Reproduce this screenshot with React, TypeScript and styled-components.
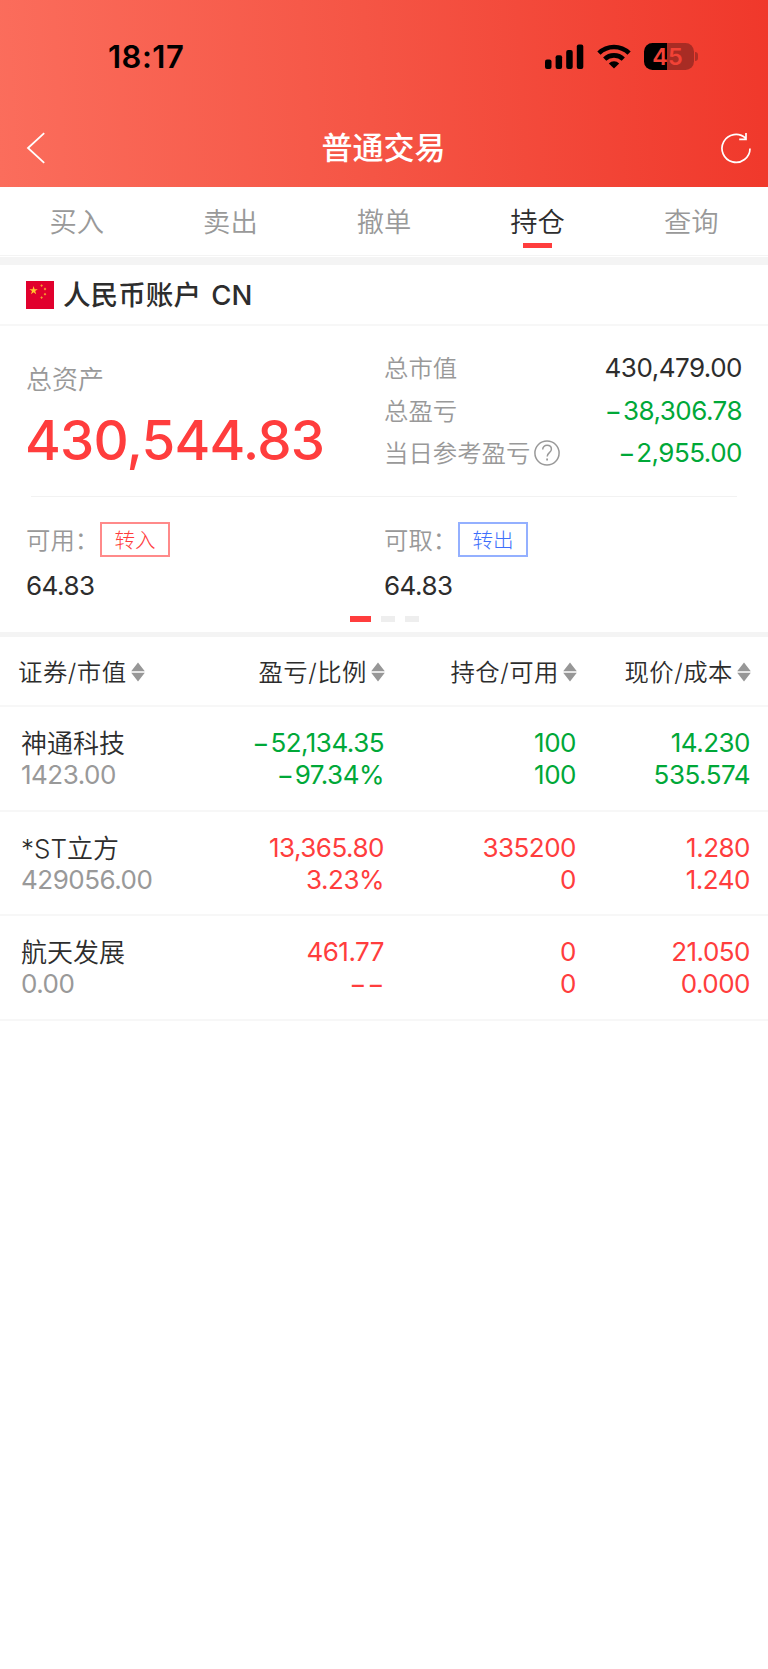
import React from "react";
import styled, { createGlobalStyle } from "styled-components";

const RED = "#ff3d3d";
const GREEN = "#00a838";
const GREY = "#999999";
const INK = "#2d2d2d";
const LINE = "#f7f7f7";

const GlobalStyle = createGlobalStyle`
  * { box-sizing: border-box; }
  body {
    margin: 0;
    background: #fff;
    font-family: Inter, "Noto Sans CJK SC", sans-serif;
    color: ${INK};
  }
`;

const Screen = styled.main`
  width: 768px;
  min-height: 1669px;
  background: #fff;
`;

const Header = styled.header`
  height: 187px;
  background: linear-gradient(87deg, #fb6d5c 0%, #f55545 48%, #f0382b 100%);
`;

const StatusBar = styled.div`
  display: flex;
  align-items: center;
  height: 110px;
  padding: 3px 70px 0 108px;
  color: #000;
`;

const Clock = styled.span`
  flex: 1;
  font-size: 31px;
  font-weight: 600;
  letter-spacing: 0.5px;
`;

const StatusIcons = styled.div`
  display: flex;
  align-items: center;
  gap: 13px;
  svg { display: block; }
`;

const Battery = styled.div`
  display: flex;
  align-items: center;
  gap: 1.5px;
  margin-left: -0.5px;
`;

const BatteryBody = styled.div`
  width: 50px;
  height: 27px;
  padding-right: 2px;
  border-radius: 8.5px;
  background: linear-gradient(90deg, #000 45.5%, #a82c24 45.5%);
  color: #f24236;
  font-size: 23.5px;
  font-weight: 600;
  line-height: 27px;
  text-align: center;
`;

const BatteryTip = styled.div`
  width: 3px;
  height: 9px;
  border-radius: 0 4px 4px 0;
  background: #b02e26;
`;

const TitleBar = styled.div`
  display: flex;
  align-items: center;
  justify-content: space-between;
  height: 76px;
  padding: 0 17px 0 26px;
  svg { display: block; }
`;

const Title = styled.h1`
  margin: 0;
  color: #fff;
  font-size: 31px;
  font-weight: 500;
  line-height: 46px;
`;

const Tabs = styled.nav`
  display: grid;
  grid-template-columns: repeat(5, 1fr);
  height: 69px;
  border-bottom: 1px solid #f4f4f4;
`;

const Tab = styled.div<{ $active?: boolean }>`
  display: flex;
  flex-direction: column;
  align-items: center;
  padding-top: 16px;
  font-size: 27.3px;
  font-weight: 350;
  line-height: 40px;
  color: ${(p) => (p.$active ? INK : GREY)};
  &::after {
    content: "";
    width: 29px;
    height: 5px;
    background: ${(p) => (p.$active ? RED : "transparent")};
  }
`;

const Gap = styled.div<{ $h: number; $top?: number }>`
  height: ${(p) => p.$h}px;
  margin-top: ${(p) => p.$top ?? 0}px;
  background: #f4f4f4;
`;

const Account = styled.div`
  display: flex;
  align-items: center;
  gap: 9px;
  height: 61px;
  padding: 0 26px;
  border-bottom: 2px solid #f7f7f7;
  svg { display: block; }
`;

const AccountName = styled.span`
  padding-bottom: 3px;
  font-size: 27.6px;
  font-weight: 500;
  word-spacing: 3px;
`;

const Summary = styled.section`
  height: 306px;
  padding: 21px 26px 0;
`;

const SummaryTop = styled.div`
  display: grid;
  grid-template-columns: 358px 1fr;
  height: 149px;
`;

const Label = styled.span`
  display: inline-flex;
  align-items: center;
  padding-bottom: 3px;
  color: ${GREY};
  font-size: 24.4px;
  font-weight: 350;
  svg { margin: 3px 0 0 4px; }
`;

const Total = styled.div`
  padding-top: 12px;
  ${Label} {
    display: flex;
    height: 40px;
    font-size: 26px;
  }
`;

const TotalValue = styled.div`
  margin: 7px 0 0 -1px;
  color: ${RED};
  font-size: 54.6px;
  font-weight: 500;
  line-height: 68px;
  letter-spacing: -0.8px;
  white-space: nowrap;
`;

const Stat = styled.div`
  display: flex;
  justify-content: space-between;
  align-items: center;
  height: 42.4px;
`;

const Value = styled.span<{ $color?: string }>`
  color: ${(p) => p.$color ?? INK};
  font-size: 26px;
  font-weight: 400;
  line-height: 32px;
  letter-spacing: -0.5px;
`;

const Sign = styled.span`
  letter-spacing: 0.8px;
`;

const Divider = styled.div`
  height: 1px;
  margin: 0 5px;
  background: #f2f2f2;
`;

const Funds = styled.div`
  display: grid;
  grid-template-columns: 358px 1fr;
  padding-top: 25px;
`;

const FundHead = styled.div`
  display: flex;
  align-items: center;
  height: 35px;
  margin-bottom: 13px;
  ${Label} { width: 74px; }
`;

const Transfer = styled.button<{ $color: string; $border: string }>`
  width: 70px;
  height: 35px;
  padding: 2px 0 0;
  border: 2px solid ${(p) => p.$border};
  background: #fff;
  color: ${(p) => p.$color};
  font: 300 20.6px/29px Inter, "Noto Sans CJK SC", sans-serif;
`;

const Pager = styled.div`
  display: flex;
  justify-content: center;
  gap: 10px;
  padding-top: 14px;
`;

const Dash = styled.i<{ $on?: boolean }>`
  width: ${(p) => (p.$on ? 21 : 14)}px;
  height: 6px;
  background: ${(p) => (p.$on ? RED : "#eeeeee")};
`;

const TableRow = styled.div`
  display: grid;
  grid-template-columns: 184px 1fr 192px 174px;
  height: 104.6px;
  padding: 20px 18px 0 21px;
  border-bottom: 2px solid ${LINE};
`;

const TableHead = styled(TableRow)`
  height: 70px;
  padding: 0 17px 0 18px;
  grid-template-columns: 187px 1fr 192px 174px;
  align-items: center;
`;

const HeadCell = styled.div<{ $left?: boolean }>`
  display: flex;
  align-items: center;
  justify-content: ${(p) => (p.$left ? "flex-start" : "flex-end")};
  gap: 4px;
  padding-bottom: 1px;
  font-size: 24.4px;
  font-weight: 350;
  letter-spacing: 0.5px;
  white-space: nowrap;
  svg { margin-top: 3px; }
`;

const Cell = styled.div<{ $left?: boolean }>`
  display: flex;
  flex-direction: column;
  align-items: ${(p) => (p.$left ? "flex-start" : "flex-end")};
`;

const Name = styled.span`
  padding-top: 1px;
  font-size: 26px;
  font-weight: 350;
  line-height: 31px;
  white-space: nowrap;
`;

const SignalIcon = () => (
  <svg width="39" height="25" viewBox="0 0 39 25">
    <rect x="0" y="15.5" width="6.5" height="9.5" rx="2" />
    <rect x="10.6" y="11.3" width="6.5" height="13.7" rx="2" />
    <rect x="21.2" y="6" width="6.5" height="19" rx="2" />
    <rect x="31.8" y="0.5" width="6.5" height="24.5" rx="2" />
  </svg>
);

const WifiIcon = () => (
  <svg width="34" height="25" viewBox="0 0 34 25">
    <g fill="none" stroke="#000" strokeWidth="4.6">
      <path d="M1.9 9.2a21.6 21.6 0 0 1 30.2 0" />
      <path d="M7.7 15.1a13.4 13.4 0 0 1 18.6 0" />
    </g>
    <path d="M17 24.6 11.8 19.4a7.6 7.6 0 0 1 10.4 0z" />
  </svg>
);

const BackIcon = () => (
  <svg width="20" height="32" viewBox="0 0 20 32" fill="none" stroke="#fff" strokeWidth="1.8">
    <path d="M18.2 1.2 2 16 18.2 30.8" />
  </svg>
);

const RefreshIcon = () => (
  <svg width="30" height="32" viewBox="0 0 30 32" fill="none" stroke="#fff" strokeWidth="1.7">
    <path d="M29 16.5A14 14 0 1 1 24.6 6.2M25 1v6.4h-6.8" />
  </svg>
);

const STARS = [
  [15.6, 4.6],
  [19, 8],
  [19, 13.2],
  [15.6, 16.6],
];

const FlagIcon = () => (
  <svg width="28" height="28" viewBox="0 0 28 28">
    <rect width="28" height="28" fill="#e1002d" />
    <path
      fill="#ffc72e"
      d="m7.6 5 1 3.2h3.2L9.2 10.1l1 3.1-2.6-1.9L5 13.2l1-3.1-2.6-1.9h3.2z"
    />
    {STARS.map(([x, y]) => (
      <path key={`${x}-${y}`} fill="#f5a12e" d={`M${x} ${y - 1.4}l1.3 1.4-1.3 1.4-1.3-1.4z`} />
    ))}
  </svg>
);

const HelpIcon = () => (
  <svg width="26" height="26" viewBox="0 0 26 26" fill="none" stroke={GREY} strokeWidth="1.5">
    <circle cx="13" cy="13" r="12.1" />
    <path d="M8.7 9.6c0-2.6 1.8-4.3 4.4-4.3s4.3 1.6 4.3 3.9c0 3.4-4.2 3.5-4.2 7.2" />
    <path d="M13.1 18.4v2.1" strokeWidth="1.8" />
  </svg>
);

const SortIcon = () => (
  <svg width="14" height="20" viewBox="0 0 14 20" fill="#979797">
    <path d="M7 0.5 13.8 9.2H0.2zM7 19.5 13.8 10.8H0.2z" />
  </svg>
);

// Amounts below zero carry a minus set slightly apart from the digits.
const Amount = ({ color, children }: { color?: string; children: string }) => (
  <Value $color={color}>
    {children.startsWith("−") ? (
      <>
        <Sign>−</Sign>
        {children.slice(1)}
      </>
    ) : (
      children
    )}
  </Value>
);

const TABS = ["买入", "卖出", "撤单", "持仓", "查询"];
const COLUMNS = ["证券/市值", "盈亏/比例", "持仓/可用", "现价/成本"];
const HOLDINGS = [
  { name: "神通科技", market: "1423.00", color: GREEN, cells: [["−52,134.35", "−97.34%"], ["100", "100"], ["14.230", "535.574"]] },
  { name: "*ST立方", market: "429056.00", color: RED, cells: [["13,365.80", "3.23%"], ["335200", "0"], ["1.280", "1.240"]] },
  { name: "航天发展", market: "0.00", color: RED, cells: [["461.77", "−−"], ["0", "0"], ["21.050", "0.000"]] },
];

export default function App() {
  return (
    <Screen>
      <GlobalStyle />
      <Header>
        <StatusBar>
          <Clock>18:17</Clock>
          <StatusIcons>
            <SignalIcon />
            <WifiIcon />
            <Battery>
              <BatteryBody>45</BatteryBody>
              <BatteryTip />
            </Battery>
          </StatusIcons>
        </StatusBar>
        <TitleBar>
          <BackIcon />
          <Title>普通交易</Title>
          <RefreshIcon />
        </TitleBar>
      </Header>

      <Tabs>
        {TABS.map((t) => (
          <Tab key={t} $active={t === "持仓"}>{t}</Tab>
        ))}
      </Tabs>
      <Gap $h={8} $top={1} />

      <Account>
        <FlagIcon />
        <AccountName>人民币账户 CN</AccountName>
      </Account>

      <Summary>
        <SummaryTop>
          <Total>
            <Label>总资产</Label>
            <TotalValue>430,544.83</TotalValue>
          </Total>
          <div>
            <Stat>
              <Label>总市值</Label>
              <Amount>430,479.00</Amount>
            </Stat>
            <Stat>
              <Label>总盈亏</Label>
              <Amount color={GREEN}>−38,306.78</Amount>
            </Stat>
            <Stat>
              <Label>当日参考盈亏<HelpIcon /></Label>
              <Amount color={GREEN}>−2,955.00</Amount>
            </Stat>
          </div>
        </SummaryTop>
        <Divider />
        <Funds>
          <div>
            <FundHead>
              <Label>可用：</Label>
              <Transfer $color={RED} $border="#ff8a8a">转入</Transfer>
            </FundHead>
            <Amount>64.83</Amount>
          </div>
          <div>
            <FundHead>
              <Label>可取：</Label>
              <Transfer $color="#3e6ffb" $border="#94b0ff">转出</Transfer>
            </FundHead>
            <Amount>64.83</Amount>
          </div>
        </Funds>
        <Pager>
          <Dash $on />
          <Dash />
          <Dash />
        </Pager>
      </Summary>
      <Gap $h={5} />

      <TableHead>
        {COLUMNS.map((c, i) => (
          <HeadCell key={c} $left={i === 0}>
            {c}
            <SortIcon />
          </HeadCell>
        ))}
      </TableHead>
      {HOLDINGS.map((h) => (
        <TableRow key={h.name}>
          <Cell $left>
            <Name>{h.name}</Name>
            <Amount color={GREY}>{h.market}</Amount>
          </Cell>
          {h.cells.map(([top, bottom], i) => (
            <Cell key={i}>
              <Amount color={h.color}>{top}</Amount>
              <Amount color={h.color}>{bottom}</Amount>
            </Cell>
          ))}
        </TableRow>
      ))}
    </Screen>
  );
}
